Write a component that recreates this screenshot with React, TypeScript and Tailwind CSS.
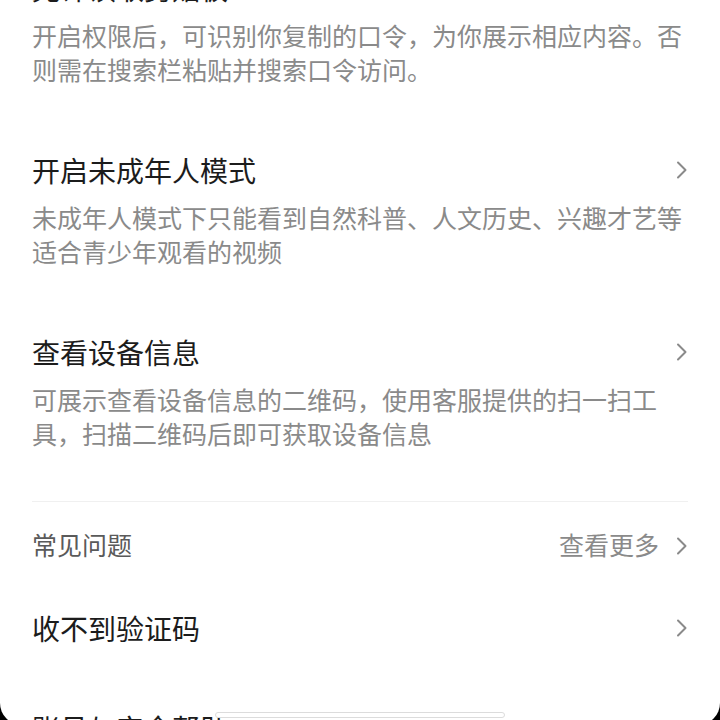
import React from 'react'

const Chevron = () => (
    <svg width="12" height="18" viewBox="0 0 12 18" fill="none" className="shrink-0">
        <path d="M2 1.5L9.5 9L2 16.5" stroke="#8a8a8a" strokeWidth="2" strokeLinecap="round" strokeLinejoin="round" />
    </svg>
)

const SettingSection = ({ title, lines, arrow = true, first = false }: { title: string, lines: string[], arrow?: boolean, first?: boolean }) => (
    <section className={first ? "mt-[-32px]" : "mt-[64px]"}>
        <div className="flex items-center justify-between h-[40px]">
            <h2 className="text-[28px] leading-[40px] text-[#1c1c1c] font-normal whitespace-nowrap">{title}</h2>
            {arrow && <Chevron />}
        </div>
        <p className="mt-[10px] text-[25px] leading-[34px] text-[#8a8a8a]">
            {lines.map((line) => (
                <span key={line} className="block whitespace-nowrap">
                    {line}
                </span>
            ))}
        </p>
    </section>
)

const App = () => {
    return (
        <div className="w-[720px] h-[720px] overflow-hidden bg-black font-['Noto_Sans_CJK_SC',sans-serif]">
            <div className="relative h-[725px] bg-white rounded-b-[22px] overflow-hidden px-[32px]">
                <SettingSection
                    first
                    arrow={false}
                    title="允许读取剪贴板"
                    lines={[
                        "开启权限后，可识别你复制的口令，为你展示相应内容。否",
                        "则需在搜索栏粘贴并搜索口令访问。",
                    ]}
                />
                <SettingSection
                    title="开启未成年人模式"
                    lines={[
                        "未成年人模式下只能看到自然科普、人文历史、兴趣才艺等",
                        "适合青少年观看的视频",
                    ]}
                />
                <SettingSection
                    title="查看设备信息"
                    lines={[
                        "可展示查看设备信息的二维码，使用客服提供的扫一扫工",
                        "具，扫描二维码后即可获取设备信息",
                    ]}
                />

                {/* FAQ */}
                <div className="mt-[51px] h-px bg-[#f0f0f0]" />
                <div className="mt-[25px] flex items-center justify-between h-[34px]">
                    <span className="text-[25px] leading-[34px] text-[#5a5a5a]">常见问题</span>
                    <div className="flex items-center gap-[17px] pt-[4px]">
                        <span className="text-[25px] leading-[34px] text-[#8a8a8a] mt-[-4px]">查看更多</span>
                        <Chevron />
                    </div>
                </div>
                <div className="mt-[47px] flex items-center justify-between h-[40px]">
                    <span className="text-[28px] leading-[40px] text-[#1c1c1c]">收不到验证码</span>
                    <Chevron />
                </div>
                <div className="mt-[60px] flex items-center h-[40px]">
                    <span className="text-[28px] leading-[40px] text-[#1c1c1c]">账号与安全帮助</span>
                </div>

                {/* home indicator */}
                <div className="absolute top-[712px] left-[215px] w-[290px] h-[6px] rounded-full bg-white border border-[#dcdcdc]" />
            </div>
        </div>
    )
}

export default App
